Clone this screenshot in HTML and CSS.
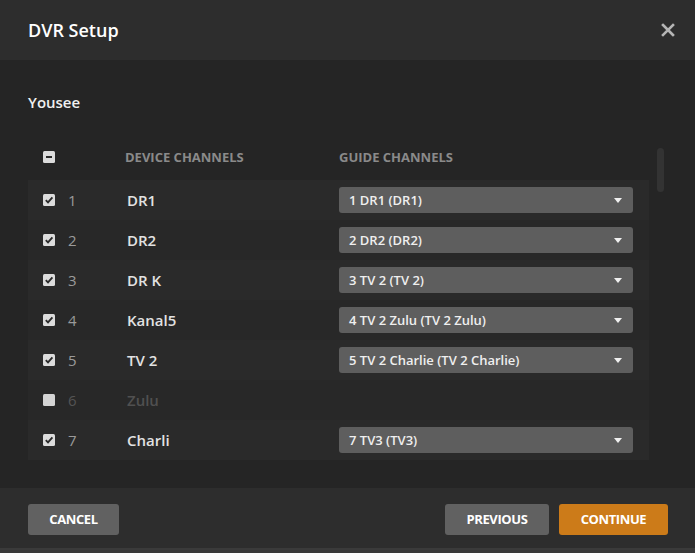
FILE: index.html
```html
<!DOCTYPE html>
<html>
<head>
<meta charset="utf-8">
<link rel="stylesheet" href="styles.css">
</head>
<body>
<div class="modal">
  <header class="head">
    <h1 class="title">DVR Setup</h1>
    <span class="close">
      <svg width="14" height="14" viewBox="0 0 14 14"><path d="M2 2 L12 12 M12 2 L2 12" stroke="#b5b5b5" stroke-width="2.6" stroke-linecap="square"/></svg>
    </span>
  </header>
  <main class="body">
    <div class="provider">Yousee</div>
    <div class="tablewrap">
      <div class="table">
        <div class="row thead">
          <span class="cb"><svg width="12" height="12" viewBox="0 0 12 12"><rect x="0" y="0" width="12" height="12" rx="1.5" fill="#dcdcdc"/><rect x="3" y="5" width="6" height="2" fill="#2a2a2a"/></svg></span>
          <span class="num"></span>
          <span class="dev th">DEVICE CHANNELS</span>
          <span class="guide th">GUIDE CHANNELS</span>
        </div>
        <div class="row odd"><span class="cb"><svg width="12" height="12" viewBox="0 0 12 12"><rect width="12" height="12" rx="1.5" fill="#dcdcdc"/><path d="M2.8 6.2 L5 8.4 L9.4 3.4" stroke="#2a2a2a" stroke-width="1.9" fill="none"/></svg></span><span class="num">1</span><span class="dev">DR1</span><span class="guide"><span class="select">1 DR1 (DR1)<i class="caret"></i></span></span></div>
        <div class="row even"><span class="cb"><svg width="12" height="12" viewBox="0 0 12 12"><rect width="12" height="12" rx="1.5" fill="#dcdcdc"/><path d="M2.8 6.2 L5 8.4 L9.4 3.4" stroke="#2a2a2a" stroke-width="1.9" fill="none"/></svg></span><span class="num">2</span><span class="dev">DR2</span><span class="guide"><span class="select">2 DR2 (DR2)<i class="caret"></i></span></span></div>
        <div class="row odd"><span class="cb"><svg width="12" height="12" viewBox="0 0 12 12"><rect width="12" height="12" rx="1.5" fill="#dcdcdc"/><path d="M2.8 6.2 L5 8.4 L9.4 3.4" stroke="#2a2a2a" stroke-width="1.9" fill="none"/></svg></span><span class="num">3</span><span class="dev">DR K</span><span class="guide"><span class="select">3 TV 2 (TV 2)<i class="caret"></i></span></span></div>
        <div class="row even"><span class="cb"><svg width="12" height="12" viewBox="0 0 12 12"><rect width="12" height="12" rx="1.5" fill="#dcdcdc"/><path d="M2.8 6.2 L5 8.4 L9.4 3.4" stroke="#2a2a2a" stroke-width="1.9" fill="none"/></svg></span><span class="num">4</span><span class="dev">Kanal5</span><span class="guide"><span class="select">4 TV 2 Zulu (TV 2 Zulu)<i class="caret"></i></span></span></div>
        <div class="row odd"><span class="cb"><svg width="12" height="12" viewBox="0 0 12 12"><rect width="12" height="12" rx="1.5" fill="#dcdcdc"/><path d="M2.8 6.2 L5 8.4 L9.4 3.4" stroke="#2a2a2a" stroke-width="1.9" fill="none"/></svg></span><span class="num">5</span><span class="dev">TV 2</span><span class="guide"><span class="select">5 TV 2 Charlie (TV 2 Charlie)<i class="caret"></i></span></span></div>
        <div class="row even disabled"><span class="cb"><svg width="12" height="12" viewBox="0 0 12 12"><rect width="12" height="12" rx="1.5" fill="#d4d4d4"/></svg></span><span class="num">6</span><span class="dev">Zulu</span><span class="guide"></span></div>
        <div class="row odd"><span class="cb"><svg width="12" height="12" viewBox="0 0 12 12"><rect width="12" height="12" rx="1.5" fill="#dcdcdc"/><path d="M2.8 6.2 L5 8.4 L9.4 3.4" stroke="#2a2a2a" stroke-width="1.9" fill="none"/></svg></span><span class="num">7</span><span class="dev">Charli</span><span class="guide"><span class="select">7 TV3 (TV3)<i class="caret"></i></span></span></div>
      </div>
      <div class="scrolltrack"><div class="thumb"></div></div>
    </div>
  </main>
  <footer class="foot">
    <button class="btn">CANCEL</button>
    <div class="right">
      <button class="btn prev">PREVIOUS</button>
      <button class="btn primary">CONTINUE</button>
    </div>
  </footer>
  <div class="pagebar"></div>
</div>
</body>
</html>
```
FILE: styles.css
```css
* { box-sizing: border-box; }
html, body { margin: 0; padding: 0; }
body {
  width: 695px;
  height: 553px;
  overflow: hidden;
  background: #252525;
  font-family: "Open Sans", "Liberation Sans", sans-serif;
  color: #eee;
}
.modal { display: flex; flex-direction: column; height: 553px; }
.head {
  height: 60px;
  background: #2d2d2d;
  display: flex;
  align-items: center;
  justify-content: space-between;
  padding: 0 20px 0 28px;
}
.title {
  margin: 0;
  font-size: 18px;
  font-weight: 600;
  color: #fff;
  letter-spacing: 0;
}
.close { display: flex; width: 14px; height: 14px; }
.body {
  height: 428px;
  background: #252525;
  padding: 32px 0 0 28px;
}
.provider {
  font-size: 15px;
  font-weight: 600;
  color: #f0f0f0;
  line-height: 20px;
  height: 20px;
}
.tablewrap { display: flex; margin-top: 23px; }
.table { width: 621px; }
.row {
  display: flex;
  align-items: center;
  height: 40px;
}
.thead { height: 43px; margin-bottom: 2px; }
.odd { background: #2a2a2a; }
.even { background: #282828; }
.cb { width: 40px; padding-left: 15px; display: flex; }
.num { width: 59px; font-size: 15px; color: #9a9a9a; }
.dev { width: 212px; font-size: 15px; font-weight: 600; color: #e2e2e2; }
.th { font-size: 13px; font-weight: 700; color: #8a8a8a; letter-spacing: 0; }
.thead .dev { width: 214px; margin-left: -2px; }
.guide { flex: 1; display: flex; }
.select {
  width: 294px;
  height: 26px;
  border-radius: 3px;
  background: #5e5e5e;
  display: flex;
  align-items: center;
  justify-content: space-between;
  padding: 0 10px;
  font-size: 13px;
  font-weight: 600;
  color: #efefef;
}
.caret {
  width: 0; height: 0;
  border-left: 4px solid transparent;
  border-right: 4px solid transparent;
  border-top: 5px solid #f0f0f0;
  margin-right: 1px;
}
.disabled .num { color: #545454; }
.disabled .dev { font-weight: 600; color: #505050; }
.scrolltrack { width: 46px; }
.thumb {
  width: 7px;
  height: 44px;
  border-radius: 4px;
  background: #333;
  margin: 13px 0 0 8px;
}
.foot {
  height: 60px;
  background: #2d2d2d;
  display: flex;
  align-items: center;
  justify-content: space-between;
  padding: 0 27px 0 28px;
}
.right { display: flex; gap: 10px; }
.btn {
  height: 31px;
  border: none;
  border-radius: 3px;
  background: #616161;
  color: #fff;
  font-family: "Open Sans", "Liberation Sans", sans-serif;
  font-size: 13px;
  font-weight: 700;
  letter-spacing: -0.4px;
  padding: 0;
  width: 91px;
  position: relative;
  top: 1px;
}
.prev { width: 104px; }
.primary { width: 109px; background: #cc7b19; }
.pagebar { height: 5px; background: #3a3a3a; }
```
